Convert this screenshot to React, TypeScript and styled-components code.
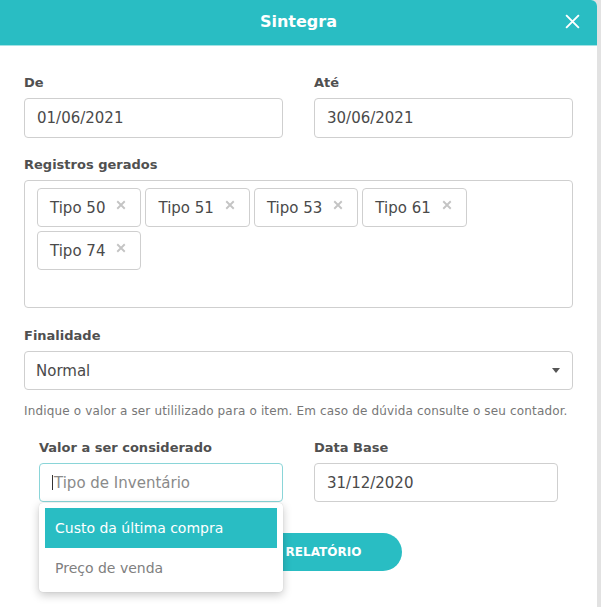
import React from "react";
import styled, { createGlobalStyle } from "styled-components";

const TEAL = "#29bdc3";
const FONT = `"DejaVu Sans", "Liberation Sans", sans-serif`;

const GlobalStyle = createGlobalStyle`
  html, body {
    margin: 0;
    padding: 0;
    background: #e2e2e2;
    font-family: ${FONT};
  }
  * { box-sizing: border-box; }
`;

const Modal = styled.div`
  width: 597px;
  min-height: 640px;
  background: #ffffff;
  border-top-right-radius: 6px;
  overflow: hidden;
`;

const Header = styled.header`
  height: 46px;
  background: ${TEAL};
  border-bottom: 1px solid #a3e2e4;
  display: grid;
  grid-template-columns: 1fr auto 1fr;
  align-items: center;
  padding: 0 16px 0 16px;
`;

const Title = styled.h1`
  grid-column: 2;
  margin: 0;
  font-size: 16px;
  font-weight: 700;
  color: #ffffff;
  padding-bottom: 3px;
`;

const CloseButton = styled.button`
  grid-column: 3;
  justify-self: end;
  width: 18px;
  height: 18px;
  border: 0;
  padding: 0;
  background: transparent;
  display: flex;
  align-items: center;
  justify-content: center;
  margin-bottom: 2px;
`;

const Body = styled.div`
  padding: 29px 24px 0 24px;
  display: flex;
  flex-direction: column;
`;

const Row = styled.div<{ $mt?: number }>`
  display: grid;
  grid-template-columns: 1fr 1fr;
  column-gap: 31px;
  margin-top: ${(p) => p.$mt ?? 0}px;
`;

const Field = styled.div<{ $mt?: number }>`
  display: flex;
  flex-direction: column;
  position: relative;
  margin-top: ${(p) => p.$mt ?? 0}px;
`;

const Label = styled.label`
  font-size: 13px;
  line-height: 16px;
  font-weight: 700;
  color: #505050;
  margin-bottom: 7px;
`;

const InputBox = styled.div<{ $focused?: boolean; $h?: number }>`
  height: ${(p) => p.$h ?? 40}px;
  border: 1px solid ${(p) => (p.$focused ? "#8ad5d8" : "#cfcfcf")};
  border-radius: 4px;
  display: flex;
  align-items: center;
  padding: 0 12px;
  font-size: 15px;
  color: #4a4a4a;
  background: #fff;
`;

const Placeholder = styled.span`
  color: #8a8a8a;
  font-size: 15px;
`;

const Caret = styled.span`
  display: inline-block;
  width: 1px;
  height: 15px;
  background: #333;
  margin-right: 1px;
`;

const TagBox = styled.div`
  height: 128px;
  border: 1px solid #cfcfcf;
  border-radius: 4px;
  padding: 7px 12px;
  display: flex;
  flex-wrap: wrap;
  align-content: flex-start;
  gap: 4px;
`;

const Tag = styled.div`
  height: 39px;
  border: 1px solid #cfcfcf;
  border-radius: 4px;
  display: flex;
  align-items: center;
  padding: 0 14px 0 12px;
  gap: 11px;
  font-size: 15px;
  color: #4a4a4a;
`;

const TagRemove = styled.span`
  display: flex;
  margin-top: -5px;
`;

const SelectBox = styled(InputBox)`
  justify-content: space-between;
  padding: 0 12px 0 11px;
`;

const Help = styled.p`
  margin: 14px 0 0 0;
  font-size: 12px;
  letter-spacing: 0.15px;
  line-height: 14px;
  color: #777;
  white-space: nowrap;
`;

const Section = styled.div`
  padding: 0 15px;
  margin-top: 22px;
  display: flex;
  flex-direction: column;
`;

const Dropdown = styled.ul`
  position: absolute;
  top: calc(100% + 1px);
  left: 0;
  right: 0;
  margin: 0;
  list-style: none;
  padding: 5px 6px 4px;
  background: #fff;
  border-radius: 4px;
  box-shadow: 0 3px 10px rgba(0, 0, 0, 0.22), 0 0 1px rgba(0, 0, 0, 0.2);
  z-index: 2;
`;

const Option = styled.li<{ $active?: boolean }>`
  height: 40px;
  display: flex;
  align-items: center;
  padding: 0 10px;
  font-size: 14px;
  color: ${(p) => (p.$active ? "#fff" : "#808080")};
  background: ${(p) => (p.$active ? TEAL : "transparent")};
`;

const Actions = styled.div`
  display: flex;
  justify-content: center;
  margin-top: 31px;
`;

const PrimaryButton = styled.button`
  width: 206px;
  height: 38px;
  border: 0;
  border-radius: 19px;
  background: ${TEAL};
  color: #fff;
  font-family: ${FONT};
  font-size: 12px;
  font-weight: 700;
`;

const XIcon = ({ size, color, w }: { size: number; color: string; w: number }) => (
  <svg width={size} height={size} viewBox="0 0 16 16">
    <path d="M2 2 L14 14 M14 2 L2 14" stroke={color} strokeWidth={w} strokeLinecap="butt" fill="none" />
  </svg>
);

const tags = ["Tipo 50", "Tipo 51", "Tipo 53", "Tipo 61", "Tipo 74"];

export default function App() {
  return (
    <>
      <GlobalStyle />
      <Modal>
        <Header>
          <Title>Sintegra</Title>
          <CloseButton aria-label="Fechar">
            <XIcon size={17} color="#fff" w={1.8} />
          </CloseButton>
        </Header>
        <Body>
          <Row>
            <Field>
              <Label>De</Label>
              <InputBox>01/06/2021</InputBox>
            </Field>
            <Field>
              <Label>Até</Label>
              <InputBox>30/06/2021</InputBox>
            </Field>
          </Row>
          <Field $mt={19}>
            <Label>Registros gerados</Label>
            <TagBox>
              {tags.map((t) => (
                <Tag key={t}>
                  {t}
                  <TagRemove>
                    <XIcon size={10} color="#c4c4c4" w={3} />
                  </TagRemove>
                </Tag>
              ))}
            </TagBox>
          </Field>
          <Field $mt={20}>
            <Label>Finalidade</Label>
            <SelectBox $h={39}>
              Normal
              <svg width="8" height="5" viewBox="0 0 8 5">
                <path d="M0 0 L8 0 L4 5 Z" fill="#555" />
              </svg>
            </SelectBox>
          </Field>
          <Help>
            Indique o valor a ser utililizado para o item. Em caso de dúvida consulte o seu contador.
          </Help>
          <Section>
            <Row>
              <Field>
                <Label>Valor a ser considerado</Label>
                <InputBox $focused $h={39}>
                  <Caret />
                  <Placeholder>Tipo de Inventário</Placeholder>
                </InputBox>
                <Dropdown>
                  <Option $active>Custo da última compra</Option>
                  <Option>Preço de venda</Option>
                </Dropdown>
              </Field>
              <Field>
                <Label>Data Base</Label>
                <InputBox $h={39}>31/12/2020</InputBox>
              </Field>
            </Row>
            <Actions>
              <PrimaryButton>GERAR RELATÓRIO</PrimaryButton>
            </Actions>
          </Section>
        </Body>
      </Modal>
    </>
  );
}
